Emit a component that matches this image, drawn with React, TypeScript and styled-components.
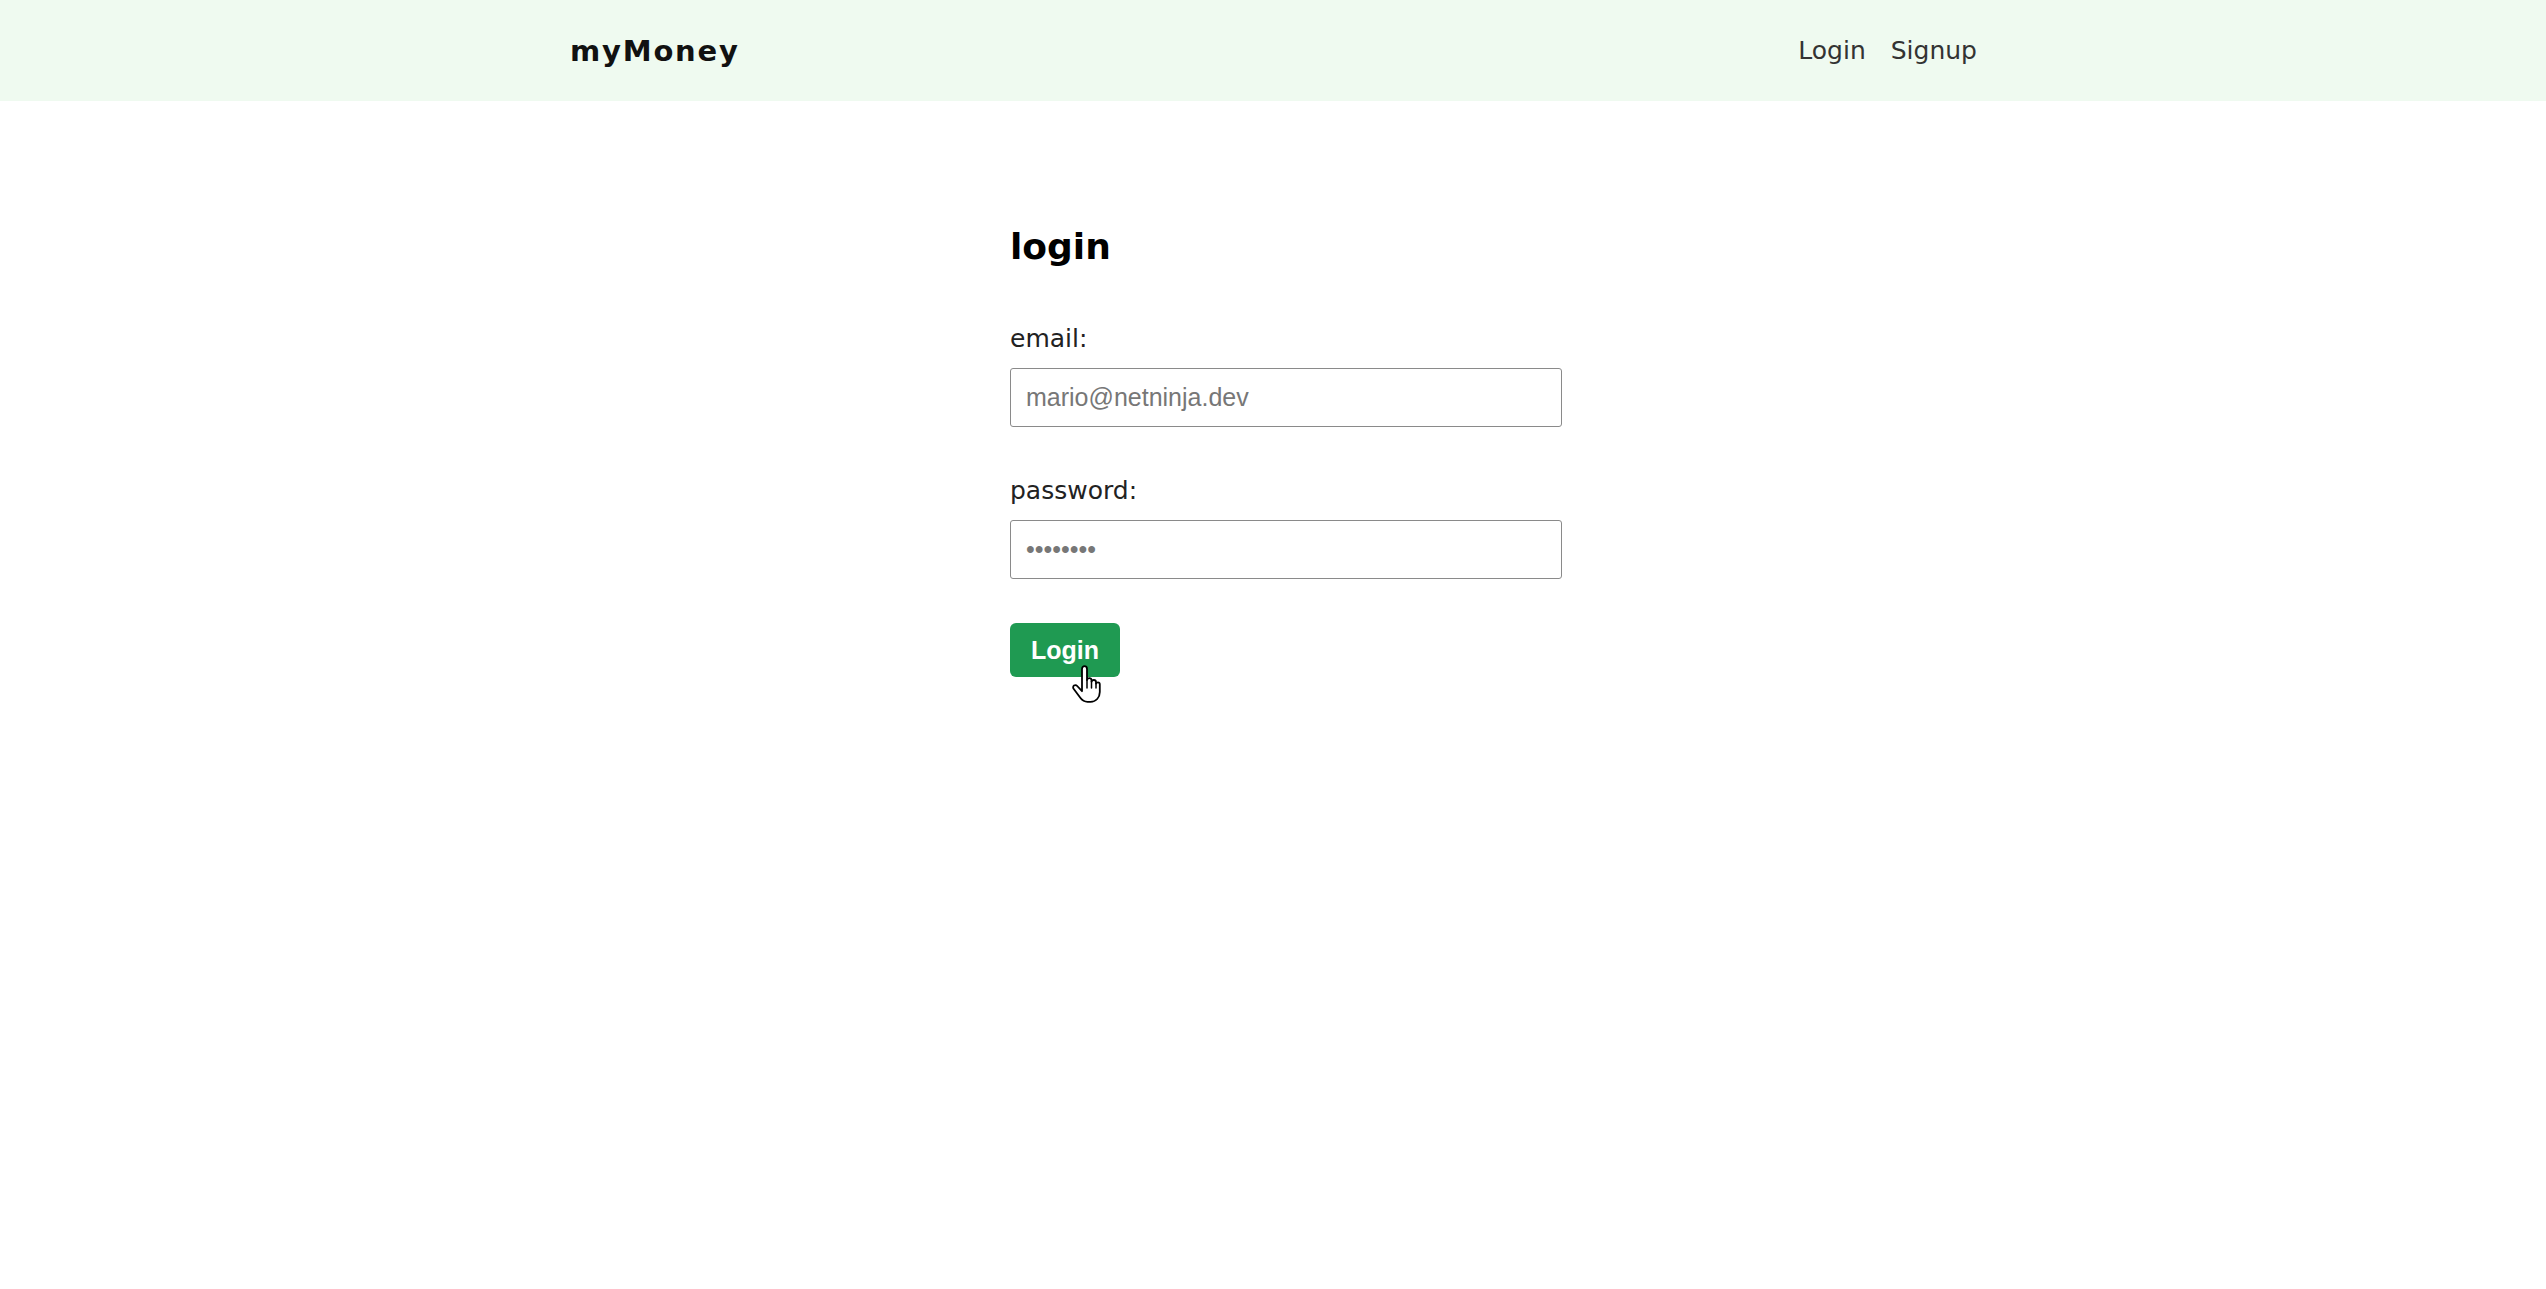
import React from "react";
import styled, { createGlobalStyle } from "styled-components";

const GlobalStyle = createGlobalStyle`
  html, body {
    margin: 0;
    padding: 0;
    background: #ffffff;
  }
  body {
    font-family: "DejaVu Sans", "Noto Sans", sans-serif;
    color: #333;
  }
  * { box-sizing: border-box; }
`;

const NavBar = styled.nav`
  height: 101px;
  background: #effaf0;
  display: flex;
  align-items: center;
`;

const NavInner = styled.div`
  width: 1408px;
  margin: 0 auto;
  display: flex;
  align-items: center;
`;

const Brand = styled.div`
  font-family: "DejaVu Sans", sans-serif;
  font-weight: 800;
  font-size: 29px;
  letter-spacing: 1.8px;
  color: #111;
  line-height: 32px;
  margin-top: 1px;
  margin-right: auto;
  padding-left: 1px;
`;

const NavLinks = styled.div`
  display: flex;
  gap: 25px;
`;

const NavLink = styled.a`
  font-family: "DejaVu Sans", sans-serif;
  font-size: 25px;
  line-height: 30px;
  color: #333;
  text-decoration: none;
  cursor: pointer;
`;

const Form = styled.form`
  width: 578px;
  margin: 0 auto;
  padding: 128px 0 0 26px;
`;

const Heading = styled.h2`
  margin: 0 0 59px;
  font-family: "DejaVu Sans", sans-serif;
  font-weight: bold;
  font-size: 36px;
  line-height: 36px;
  color: #000;
`;

const Field = styled.label<{ $gap: number }>`
  display: block;
  margin-bottom: ${(p) => p.$gap}px;
`;

const LabelText = styled.span`
  display: block;
  font-family: "DejaVu Sans", sans-serif;
  font-size: 25px;
  line-height: 30px;
  color: #222;
  margin-bottom: 14px;
`;

const Input = styled.input`
  display: block;
  width: 552px;
  height: 59px;
  padding: 0 12px 0 15px;
  border: 1px solid #8a8a8a;
  border-radius: 3px;
  font-family: "Liberation Sans", Arial, sans-serif;
  font-size: 25px;
  color: #777;
  background: #fff;
  outline: none;
`;

const ButtonWrap = styled.div`
  position: relative;
  width: 110px;
  height: 90px;
`;

const Button = styled.button`
  display: block;
  width: 110px;
  height: 54px;
  border: none;
  border-radius: 6px;
  background: #1f9a52;
  color: #ffffff;
  font-family: "Liberation Sans", Arial, sans-serif;
  font-weight: bold;
  font-size: 25px;
  cursor: pointer;
  padding: 0;
`;

const Cursor = styled.svg`
  position: absolute;
  left: 61px;
  top: 42px;
  width: 30px;
  height: 38px;
  pointer-events: none;
  z-index: 2;
`;

export default function App() {
  return (
    <>
      <GlobalStyle />
      <NavBar>
        <NavInner>
          <Brand>myMoney</Brand>
          <NavLinks>
            <NavLink>Login</NavLink>
            <NavLink>Signup</NavLink>
          </NavLinks>
        </NavInner>
      </NavBar>
      <Form onSubmit={(e) => e.preventDefault()}>
        <Heading>login</Heading>
        <Field $gap={49}>
          <LabelText>email:</LabelText>
          <Input type="email" defaultValue="mario@netninja.dev" />
        </Field>
        <Field $gap={44}>
          <LabelText>password:</LabelText>
          <Input type="password" defaultValue="ninjaabc" />
        </Field>
        <ButtonWrap>
          <Button type="submit">Login</Button>
          <Cursor viewBox="0 0 30 38" xmlns="http://www.w3.org/2000/svg">
            <path
              d="M11 4 C11 2.3 12.2 1.2 13.5 1.2 C14.8 1.2 16 2.3 16 4 L16 15 C16.3 13.8 17.3 13.2 18.3 13.2 C19.5 13.2 20.5 14.1 20.5 15.4 L20.5 16.6 C20.9 15.6 21.8 15 22.8 15 C24 15 25 16 25 17.2 L25 18.6 C25.4 17.8 26.1 17.4 26.9 17.4 C28 17.4 28.8 18.3 28.8 19.4 L28.8 27 C28.8 32.6 25 36.8 19.5 36.8 L16.5 36.8 C13.2 36.8 11.2 35.4 9.3 32.8 L2.6 23.8 C1.8 22.7 2 21.3 3 20.6 C4 19.9 5.4 20.1 6.2 21 L11 26.2 Z"
              fill="#ffffff"
              stroke="#000000"
              strokeWidth="1.8"
              strokeLinejoin="round"
            />
            <path
              d="M16 15 V23 M20.5 16.6 V23 M25 18.6 V23"
              fill="none"
              stroke="#000000"
              strokeWidth="1.5"
              strokeLinecap="round"
            />
          </Cursor>
        </ButtonWrap>
      </Form>
    </>
  );
}
